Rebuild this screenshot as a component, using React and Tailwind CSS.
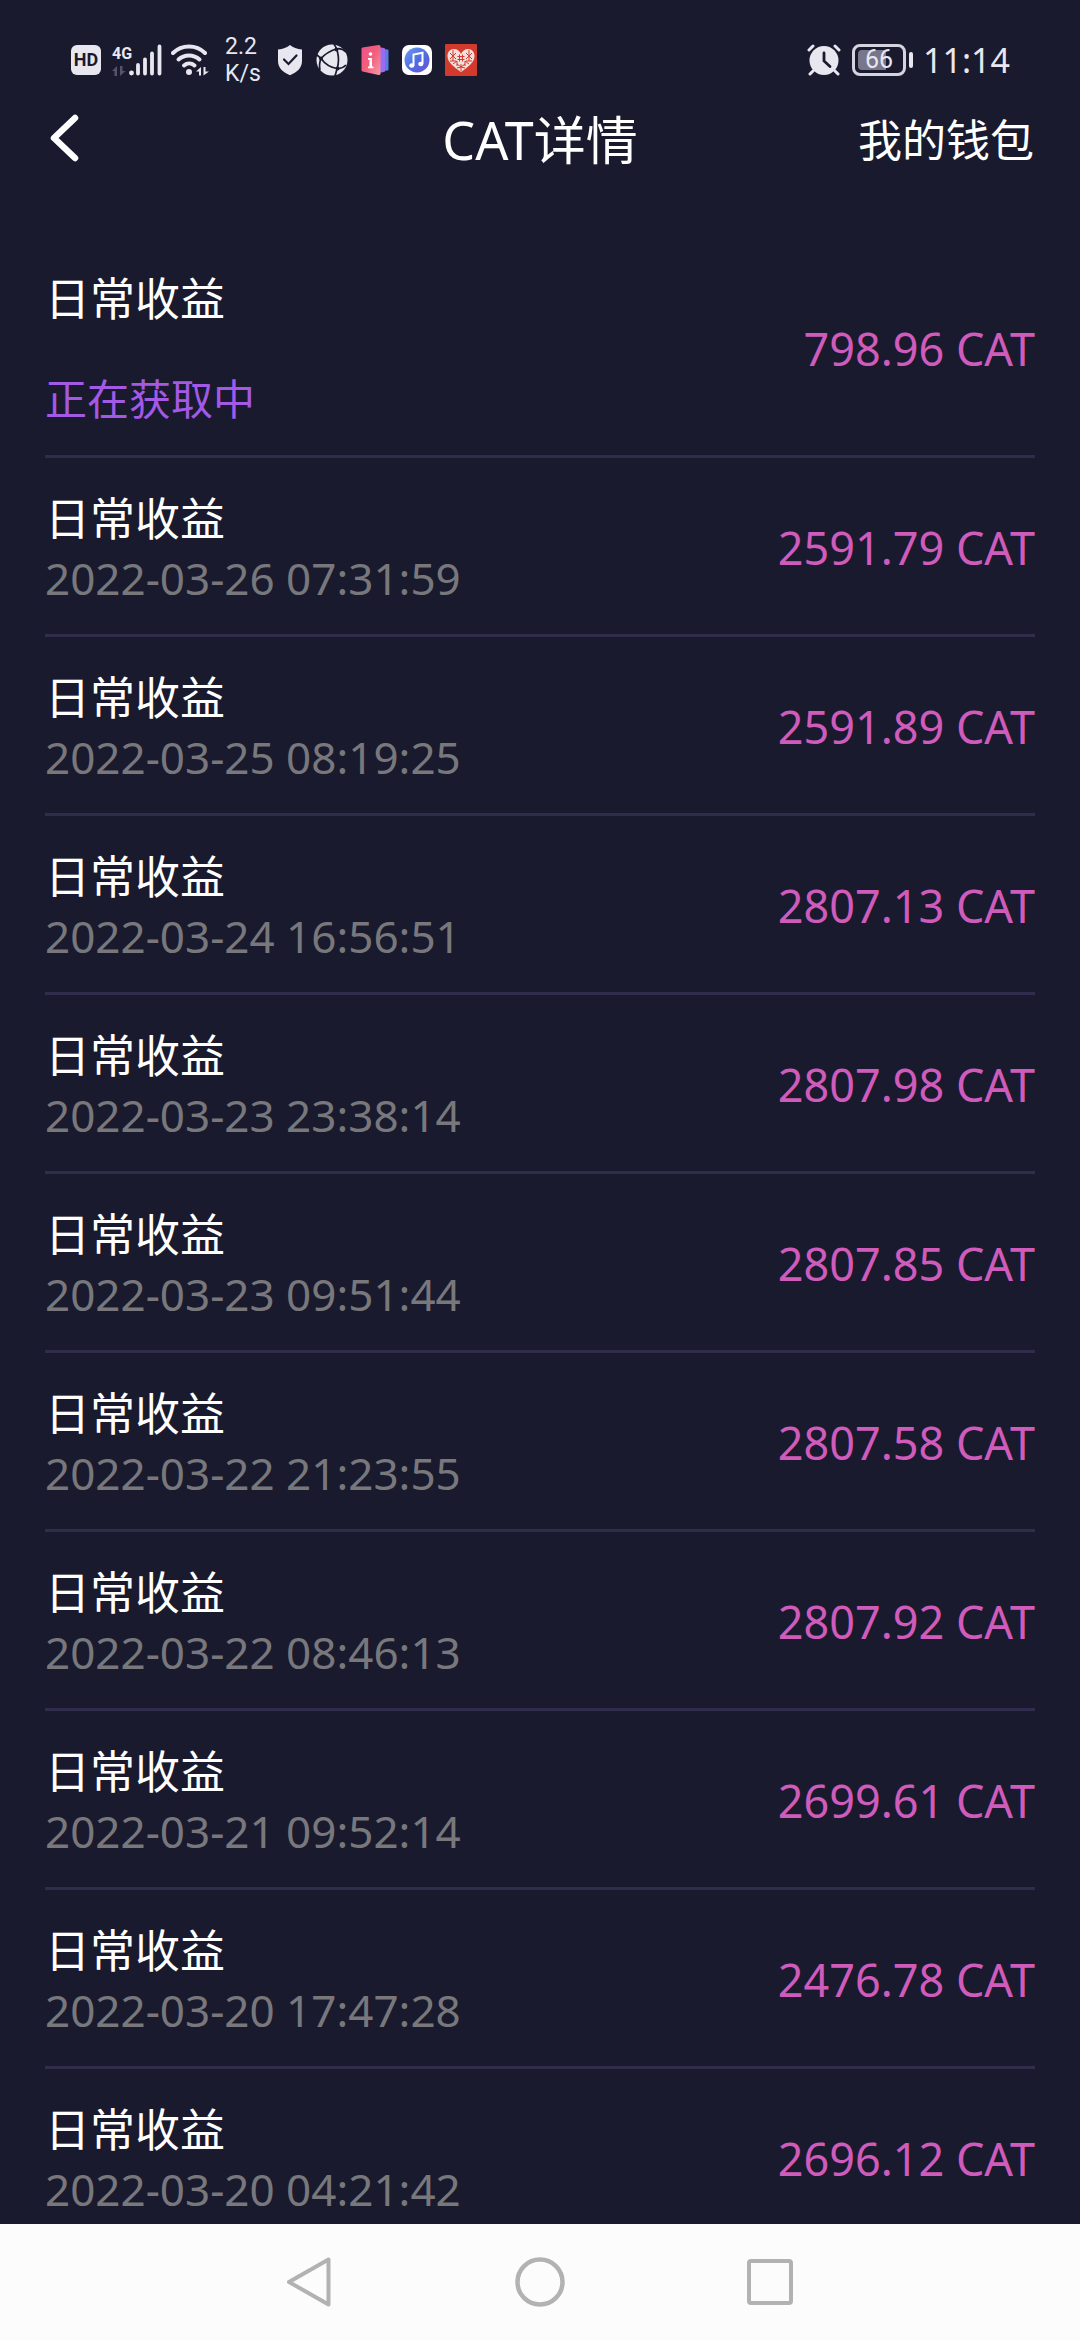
import React from 'react';

const records = [
    { id: 1, title: '日常收益', pending: true, note: '正在获取中', amount: '798.96' },
    { id: 2, title: '日常收益', note: '2022-03-26 07:31:59', amount: '2591.79' },
    { id: 3, title: '日常收益', note: '2022-03-25 08:19:25', amount: '2591.89' },
    { id: 4, title: '日常收益', note: '2022-03-24 16:56:51', amount: '2807.13' },
    { id: 5, title: '日常收益', note: '2022-03-23 23:38:14', amount: '2807.98' },
    { id: 6, title: '日常收益', note: '2022-03-23 09:51:44', amount: '2807.85' },
    { id: 7, title: '日常收益', note: '2022-03-22 21:23:55', amount: '2807.58' },
    { id: 8, title: '日常收益', note: '2022-03-22 08:46:13', amount: '2807.92' },
    { id: 9, title: '日常收益', note: '2022-03-21 09:52:14', amount: '2699.61' },
    { id: 10, title: '日常收益', note: '2022-03-20 17:47:28', amount: '2476.78' },
    { id: 11, title: '日常收益', note: '2022-03-20 04:21:42', amount: '2696.12' },
];

const SignalIcon = () => (
    <div className="flex items-center">
        <div className="flex w-[17px] flex-col gap-[3px]">
            <span className="font-[Roboto,sans-serif] text-[16px] leading-[18px] font-bold">4G</span>
            <svg width="14" height="10" viewBox="0 0 14 10" fill="#55546c">
                <path d="M0 5L5 0V10H2.500V5ZM13.500 5L8 10V0H10.500V5Z" />
            </svg>
        </div>
        <svg width="33" height="32" viewBox="17 0 33 32" fill="none" stroke="#e8e7f0" strokeLinecap="round">
            <circle cx="19.500" cy="29" r="2.400" fill="#e8e7f0" stroke="none" />
            <path d="M26 21v8.500M33 15.500v14M40 9.500v20M47.500 2.500v27" strokeWidth="3.800" />
        </svg>
    </div>
);

const WifiIcon = () => (
    <svg width="38" height="32" viewBox="0 0 38 32" fill="none" stroke="#e8e7f0" strokeWidth="4" strokeLinecap="round">
        <path d="M2 9a23 23 0 0 1 32 0" />
        <path d="M7.500 15.500a15.500 15.500 0 0 1 21 0" />
        <path d="M13 21.500a8 8 0 0 1 10.500 0" />
        <circle cx="18" cy="28" r="3" fill="#e8e7f0" stroke="none" />
        <path d="M25 27.500L30 23V31.500H28V27.500ZM38 27.500L32.500 31.500V23H34.500V27.500Z" fill="#e8e7f0" stroke="none" />
    </svg>
);

const ShieldIcon = () => (
    <svg width="26" height="32" viewBox="0 0 26 32" fill="none">
        <path d="M13 1c3 2.500 7 4 12 4.500v11.500c0 7-5 11.500-12 14.200c-7-2.700-12-7.200-12-14.200v-11.500c5-.5 9-2 12-4.500z" fill="#e8e7f0" />
        <path d="M7 15.500l4.500 4.500 8-8.500" stroke="#1a1a2e" strokeWidth="2.200" strokeLinecap="round" />
    </svg>
);

const GlobeIcon = () => (
    <svg width="32" height="32" viewBox="0 0 32 32" fill="none">
        <circle cx="16" cy="16" r="15.500" fill="#e8e7f0" />
        <g stroke="#1a1a2e" strokeWidth="1.700">
            <path d="M5 14.500C9 10 14 7 20 5C24 4 27 5 30 8" />
            <path d="M18 0C19 2 21 4 21.500 8C23 14 23 19 21 25L19 32" />
            <path d="M0 10L5 14.500C9 20 14 23.500 21 24.500C25 25 28 23 30 21" />
            <path d="M5 14.500C3.500 18 3 21 4 26" />
        </g>
        <circle cx="5" cy="14.500" r="2" fill="#1a1a2e" />
        <circle cx="20.500" cy="5.500" r="2" fill="#1a1a2e" />
        <circle cx="21.500" cy="24.500" r="2" fill="#1a1a2e" />
    </svg>
);

const InfoIcon = () => (
    <svg width="28" height="32" viewBox="0 0 28 32">
        <defs>
            <linearGradient id="info" x1="0" y1="0" x2="1" y2="1">
                <stop offset="0" stopColor="#f0508c" />
                <stop offset=".5" stopColor="#f2607c" />
                <stop offset="1" stopColor="#f49aa8" />
            </linearGradient>
        </defs>
        <path d="M20 4.500l6.500 1q1 0 1 1v19q0 1-1 1l-6.500 1z" fill="#5b7fe0" />
        <path d="M17 3l6 1q1 0 1 1v22q0 1-1 1l-6 1z" fill="#9a6cf0" />
        <path d="M1.500 3.500L17.500 1q2-.3 2 1.500v27q0 1.800-2 1.500l-16-3.500q-1-.3-1-1.500v-21q0-1.200 1-1.500z" fill="url(#info)" />
        <circle cx="9.500" cy="10" r="1.800" fill="#fff" />
        <path d="M7 14h4v8.500h1.500v1.800h-5.500v-1.800h1.500v-6.700h-1.500z" fill="#fff" />
    </svg>
);

const MusicIcon = () => (
    <svg width="30" height="30" viewBox="0 0 30 30">
        <defs>
            <linearGradient id="music" x1="0" y1="0" x2="1" y2="1">
                <stop offset="0" stopColor="#6b9df0" />
                <stop offset=".5" stopColor="#4f6fe0" />
                <stop offset="1" stopColor="#6b4fd8" />
            </linearGradient>
        </defs>
        <rect width="30" height="30" rx="7" fill="#fff" />
        <circle cx="15" cy="15" r="12.500" fill="url(#music)" />
        <path d="M11.500 20.500v-11l9-1.700v11" fill="none" stroke="#fff" strokeWidth="2" />
        <ellipse cx="9.800" cy="20.500" rx="2.600" ry="2.200" fill="#fff" />
        <ellipse cx="18.800" cy="19" rx="2.600" ry="2.200" fill="#fff" />
    </svg>
);

const HeartIcon = () => (
    <svg width="32" height="32" viewBox="0 0 32 32">
        <rect width="32" height="32" rx="1" fill="#d13a2c" />
        <path d="M16 10c1-3 4-5 7-5c4 0 6.500 3 6.500 7c0 7-7 11-13.500 16c-6.500-5-13.500-9-13.500-16c0-4 2.500-7 6.500-7c3 0 6 2 7 5z" fill="#f6dedb" />
        <g stroke="#d13a2c" strokeWidth="1" fill="none">
            <path d="M14.500 10.500v7M17.500 10.500v7M12.500 12.500h7M12.500 15.500h7" />
            <path d="M5 9l6 6M5 15l6-6M8 6v11M27 9l-6 6M27 15l-6-6M24 6v11" />
            <path d="M5 17h6M21 17h6M8 20l4-3v5M24 20l-4-3v5M12 20l4 3 4-3M16 20v7M12 24l4-1 4 1" />
        </g>
    </svg>
);

const AlarmIcon = () => (
    <svg width="34" height="32" viewBox="0 0 34 32" fill="none" strokeLinecap="round">
        <circle cx="17" cy="16.500" r="14.500" fill="#e8e7f0" />
        <path d="M2 6l4-4M32 6l-4-4M6 27l-3 3M28 27l3 3" stroke="#e8e7f0" strokeWidth="3" />
        <path d="M17 9v8l6 5.500" stroke="#1a1a2e" strokeWidth="2.800" />
    </svg>
);

const StatusBar = () => (
    <div className="flex h-[100px] shrink-0 items-center justify-between pt-5 pr-[70px] pl-[71px] text-[#e8e7f0]">
        <div className="flex items-center">
            <span className="flex h-[30px] w-[30px] items-center justify-center rounded-md bg-[#e8e7f0] font-[Roboto,sans-serif] text-[18px] leading-[30px] font-bold text-[#1a1a2e]">HD</span>
            <div className="ml-[11px]"><SignalIcon /></div>
            <div className="ml-[9px]"><WifiIcon /></div>
            <div className="ml-4 w-[36px] font-[Roboto,sans-serif] text-[23px] leading-[27px]">
                <div>2.2</div>
                <div>K/s</div>
            </div>
            <div className="ml-4 flex items-center gap-[13px]">
                <ShieldIcon />
                <GlobeIcon />
                <InfoIcon />
                <MusicIcon />
                <HeartIcon />
            </div>
        </div>
        <div className="flex items-center">
            <AlarmIcon />
            {/* Battery */}
            <div className="ml-[11px] flex items-center gap-[3px]">
                <div className="relative flex h-[32px] w-[54px] items-center justify-center rounded-lg border-3 border-[#d4d3e0]">
                    <div className="absolute inset-y-[3px] left-[3px] w-[28px] rounded-l-sm bg-[#77768a]" />
                    <span className="relative font-[Roboto,sans-serif] text-[25px] leading-[26px]">66</span>
                </div>
                <div className="h-4 w-1 rounded-full bg-[#e8e7f0]" />
            </div>
            <span className="ml-[10px] text-[34px] leading-[40px]">11:14</span>
        </div>
    </div>
);

const Header = () => (
    <header className="grid h-[80px] shrink-0 grid-cols-3 items-center px-[46px]">
        <button type="button" aria-label="返回" className="justify-self-start pb-1">
            <svg width="34" height="52" viewBox="0 0 34 52" fill="none" stroke="#fff" strokeWidth="6.500" strokeLinecap="round" strokeLinejoin="round">
                <path d="M29 6L8 26L29 46" />
            </svg>
        </button>
        <h1 className="justify-self-center text-[52px] leading-[70px]">CAT详情</h1>
        <a href="#wallet" className="justify-self-end text-[44px] leading-[60px]">我的钱包</a>
    </header>
);

const RecordRow = ({ record }) => (
    <li className="flex items-center justify-between border-b-3 border-[#2f2d4b] pt-[31px] pb-[27px]">
        <div className={record.pending ? 'flex flex-col gap-[41px]' : 'flex flex-col'}>
            <span className="text-[45px] leading-[60px]">{record.title}</span>
            <span className={record.pending ? 'text-[42px] leading-[58px] text-[#a259e6]' : 'text-[44px] leading-[58px] text-[#78787c]'}>
                {record.note}
            </span>
        </div>
        <span className="text-[45px] leading-[60px] text-[#cf5bbb]">{record.amount} CAT</span>
    </li>
);

const NavBar = () => (
    <nav className="flex h-[116px] shrink-0 items-center justify-center gap-[180px] bg-[#fcfcfc]">
        <button type="button" aria-label="返回">
            <svg width="50" height="50" viewBox="0 0 50 50" fill="none" stroke="#b2b2b2" strokeWidth="4" strokeLinejoin="round">
                <path d="M43.500 2.500v45L4 25z" />
            </svg>
        </button>
        <button type="button" aria-label="主屏幕">
            <svg width="50" height="50" viewBox="0 0 50 50" fill="none" stroke="#b2b2b2" strokeWidth="4.500">
                <circle cx="25" cy="25" r="22.500" />
            </svg>
        </button>
        <button type="button" aria-label="最近任务">
            <svg width="50" height="50" viewBox="0 0 50 50" fill="none" stroke="#b2b2b2" strokeWidth="4">
                <rect x="4" y="4" width="42" height="42" rx="2" />
            </svg>
        </button>
    </nav>
);

const App = () => {
    return (
        <div className="flex h-screen flex-col bg-[#1a1a2e] font-['Noto_Sans','Noto_Sans_CJK_SC',sans-serif] text-white">
            <StatusBar />
            <Header />
            <ul className="min-h-0 flex-1 overflow-y-auto px-[45px] pt-[58px] [scrollbar-width:none]">
                {records.map(record => (
                    <RecordRow key={record.id} record={record} />
                ))}
            </ul>
            <NavBar />
        </div>
    );
};

export default App;
